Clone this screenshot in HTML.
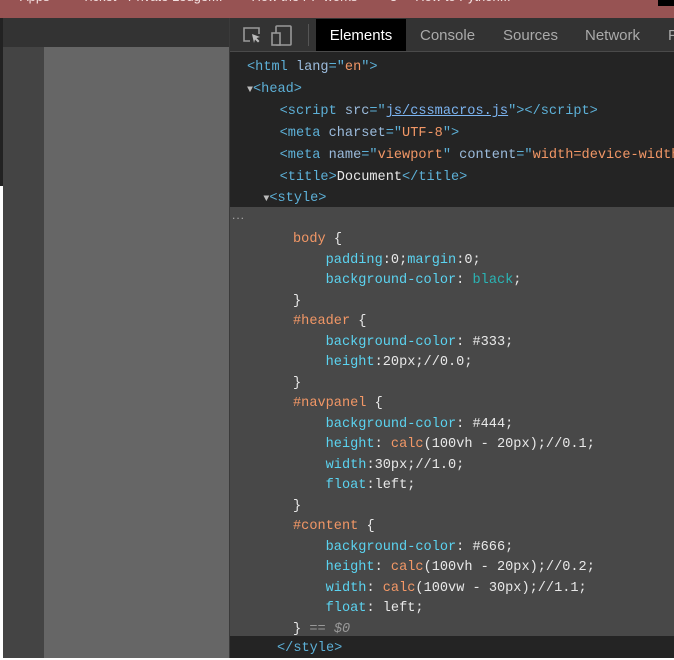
<!DOCTYPE html>
<html><head><style>
*{margin:0;padding:0;box-sizing:border-box}
body{width:674px;height:658px;overflow:hidden;background:#fff;position:relative;font-family:"Liberation Sans",sans-serif}
.abs{position:absolute}
.code{font-family:"Liberation Mono",monospace;font-size:13.6px;white-space:pre;line-height:20.5px}
.t{color:#5db0d7}.a{color:#9bbbdc}.v{color:#f29766}.s{color:#f29766}.p{color:#5bd3f0}.w{color:#e8e8e8}.k{color:#2ab4b4}.g{color:#999;font-style:italic}
</style></head><body>
<div class="abs" style="left:0;top:0;width:674px;height:18px;background:#975353"></div>
<div class="abs" style="left:20px;top:-11px;font-size:13px;color:#f3e0e0;white-space:nowrap">Apps &nbsp;&nbsp;&nbsp;&nbsp;&nbsp;&nbsp;&nbsp;&nbsp;Ticket · Private Ledger... &nbsp;&nbsp;&nbsp;&nbsp;&nbsp;&nbsp;&nbsp;How the PP works &nbsp;&nbsp;&nbsp;&nbsp;&nbsp;&nbsp;&nbsp;&nbsp;3 &nbsp;&nbsp;&nbsp;&nbsp;How to Python...</div>
<div class="abs" style="left:658px;top:0;width:16px;height:6px;background:#000"></div>
<div class="abs" style="left:0;top:18px;width:3px;height:168px;background:#222"></div>
<div class="abs" style="left:3px;top:18px;width:226px;height:29px;background:#333"></div>
<div class="abs" style="left:3px;top:47px;width:41px;height:611px;background:#444"></div>
<div class="abs" style="left:44px;top:47px;width:185px;height:611px;background:#666"></div>
<div class="abs" style="left:229px;top:18px;width:445px;height:640px;background:#242424;border-left:1px solid #3a3a3a"></div>
<div class="abs" style="left:230px;top:18px;width:444px;height:34px;background:#333;border-bottom:1px solid #4a4a4a"></div>
<svg class="abs" style="left:240px;top:24px" width="60" height="24" viewBox="0 0 60 24">
<path d="M10 17H4V4h15v6" fill="none" stroke="#999" stroke-width="1.6"/>
<path d="M12 10l8 3-3.5 1 3 3-1.5 1.5-3-3-1 3.5z" fill="#bbb"/>
<rect x="36" y="2" width="15" height="19" rx="1" fill="none" stroke="#999" stroke-width="1.6"/>
<rect x="32" y="9" width="8" height="12" fill="#333" stroke="#999" stroke-width="1.6"/>
</svg>
<div class="abs" style="left:308px;top:24px;width:1px;height:22px;background:#555"></div>
<div class="abs" style="left:316px;top:19px;width:90px;height:32px;background:#000"></div>
<div class="abs" style="left:316px;top:27px;width:90px;text-align:center;color:#fff;font-size:15px">Elements</div>
<div class="abs" style="left:420px;top:27px;color:#aaa;font-size:15px">Console</div>
<div class="abs" style="left:503px;top:27px;color:#aaa;font-size:15px">Sources</div>
<div class="abs" style="left:585px;top:27px;color:#aaa;font-size:15px">Network</div>
<div class="abs" style="left:668px;top:27px;color:#aaa;font-size:15px">P</div>
<div class="abs" style="left:230px;top:207px;width:444px;height:429px;background:#484848"></div>
<div class="abs" style="left:232px;top:208px;color:#aaa;font-size:12px;letter-spacing:1px">...</div>
<div class="abs code" style="left:247px;top:57px;line-height:21.7px"><span class="t">&lt;html </span><span class="a">lang</span><span class="t">="</span><span class="v">en</span><span class="t">"&gt;</span>
<span style="color:#bbb;font-size:10px">▼</span><span class="t">&lt;head&gt;</span>
    <span class="t">&lt;script </span><span class="a">src</span><span class="t">="</span><span class="t" style="text-decoration:underline;color:#7cb4f0">js/cssmacros.js</span><span class="t">"&gt;&lt;/script&gt;</span>
    <span class="t">&lt;meta </span><span class="a">charset</span><span class="t">="</span><span class="v">UTF-8</span><span class="t">"&gt;</span>
    <span class="t">&lt;meta </span><span class="a">name</span><span class="t">="</span><span class="v">viewport</span><span class="t">" </span><span class="a">content</span><span class="t">="</span><span class="v">width=device-width</span>
    <span class="t">&lt;title&gt;</span><span class="w">Document</span><span class="t">&lt;/title&gt;</span>
  <span style="color:#bbb;font-size:10px">▼</span><span class="t">&lt;style&gt;</span></div>
<div class="abs code" style="left:293px;top:230px"><span class="s">body</span> <span class="w">{</span>
    <span class="p">padding</span><span class="w">:0;</span><span class="p">margin</span><span class="w">:0;</span>
    <span class="p">background-color</span><span class="w">: </span><span class="k">black</span><span class="w">;</span>
<span class="w">}</span>
<span class="s">#header</span> <span class="w">{</span>
    <span class="p">background-color</span><span class="w">: #333;</span>
    <span class="p">height</span><span class="w">:20px;//0.0;</span>
<span class="w">}</span>
<span class="s">#navpanel</span> <span class="w">{</span>
    <span class="p">background-color</span><span class="w">: #444;</span>
    <span class="p">height</span><span class="w">: </span><span class="s">calc</span><span class="w">(100vh - 20px);//0.1;</span>
    <span class="p">width</span><span class="w">:30px;//1.0;</span>
    <span class="p">float</span><span class="w">:left;</span>
<span class="w">}</span>
<span class="s">#content</span> <span class="w">{</span>
    <span class="p">background-color</span><span class="w">: #666;</span>
    <span class="p">height</span><span class="w">: </span><span class="s">calc</span><span class="w">(100vh - 20px);//0.2;</span>
    <span class="p">width</span><span class="w">: </span><span class="s">calc</span><span class="w">(100vw - 30px);//1.1;</span>
    <span class="p">float</span><span class="w">: left;</span>
<span class="w">}</span> <span class="g">== $0</span></div>
<div class="abs code" style="left:277px;top:639px"><span class="t">&lt;/style&gt;</span></div>
</body></html>
